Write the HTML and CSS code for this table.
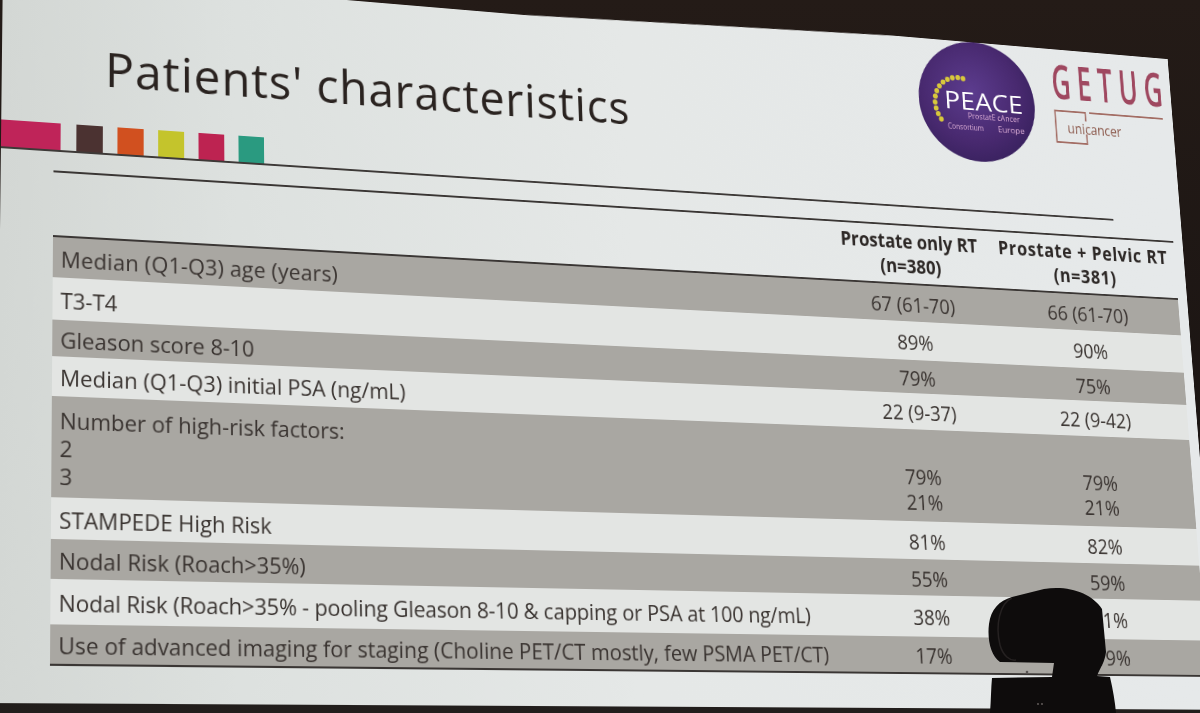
FILE: index.html
```html
<!DOCTYPE html>
<html lang="en">
<head>
<meta charset="utf-8">
<title>Patients' characteristics</title>
<link rel="stylesheet" href="styles.css">
</head>
<body>
<div class="screen">
  <section class="slide">
    <header class="head">
      <div class="head-left">
        <h1 class="title">Patients' characteristics</h1>
        <div class="swatches">
          <span class="sw sw-bar"></span>
          <span class="sw sw-brown"></span>
          <span class="sw sw-orange"></span>
          <span class="sw sw-lime"></span>
          <span class="sw sw-red"></span>
          <span class="sw sw-teal"></span>
        </div>
      </div>
      <svg class="peace" width="146" height="136" viewBox="0 0 146 136">
        <defs>
          <radialGradient id="pg" cx="45%" cy="42%" r="60%">
            <stop offset="0" stop-color="#5c3c8e"/>
            <stop offset="0.7" stop-color="#48296f"/>
            <stop offset="1" stop-color="#3a2260"/>
          </radialGradient>
        </defs>
        <ellipse cx="73" cy="68" rx="73" ry="68" fill="url(#pg)"/>
        <g fill="#d8c83c">
          <circle cx="57" cy="42.8" r="3"/>
          <circle cx="50.4" cy="42" r="3"/>
          <circle cx="43.6" cy="42.7" r="3"/>
          <circle cx="37.2" cy="44.9" r="3"/>
          <circle cx="31.5" cy="48.4" r="3"/>
          <circle cx="26.7" cy="53.2" r="3"/>
          <circle cx="23" cy="58.9" r="3"/>
          <circle cx="20.8" cy="65.2" r="3"/>
          <circle cx="20" cy="72" r="3"/>
          <circle cx="20.8" cy="78.7" r="3"/>
          <circle cx="23" cy="85.1" r="3"/>
          <circle cx="26.6" cy="90.8" r="3"/>
        </g>
        <text class="peace-word" x="31.7" y="78" textLength="99" lengthAdjust="spacingAndGlyphs">PEACE</text>
        <text class="peace-small" x="60" y="88.5" textLength="65.6" lengthAdjust="spacingAndGlyphs">ProstatE cAncer</text>
        <text class="peace-small" x="34.2" y="101.5" textLength="45" lengthAdjust="spacingAndGlyphs">Consortium</text>
        <text class="peace-small" x="97" y="101.5" textLength="34" lengthAdjust="spacingAndGlyphs">Europe</text>
      </svg>
      <div class="getug">
        <div class="getug-word">GETUG</div>
        <svg class="unicancer" width="143" height="40" viewBox="0 0 143 40">
          <path d="M40.7 12 V2 H1.7 V38 H40.7 V27" fill="none" stroke="#a36d64" stroke-width="1.8"/>
          <path d="M46 2 H142" fill="none" stroke="#a36d64" stroke-width="1.8"/>
          <text class="uni-word" x="16.3" y="27" textLength="70" lengthAdjust="spacingAndGlyphs">unicancer</text>
        </svg>
      </div>
    </header>
    <div class="rule"></div>
    <table class="data">
      <colgroup>
        <col class="c-label">
        <col class="c-a">
        <col class="c-b">
      </colgroup>
      <thead>
        <tr>
          <th></th>
          <th>Prostate only RT<br>(n=380)</th>
          <th class="th-wide">Prostate + Pelvic RT<br>(n=381)</th>
        </tr>
      </thead>
      <tbody>
        <tr class="shade"><td class="lbl-wide">Median (Q1-Q3) age (years)</td><td>67 (61-70)</td><td>66 (61-70)</td></tr>
        <tr><td>T3-T4</td><td>89%</td><td>90%</td></tr>
        <tr class="shade"><td>Gleason score 8-10</td><td>79%</td><td>75%</td></tr>
        <tr><td>Median (Q1-Q3) initial PSA (ng/mL)</td><td>22 (9-37)</td><td>22 (9-42)</td></tr>
        <tr class="shade multi"><td>Number of high-risk factors:<br>2<br>3</td><td><br>79%<br>21%</td><td><br>79%<br>21%</td></tr>
        <tr><td>STAMPEDE High Risk</td><td>81%</td><td>82%</td></tr>
        <tr class="shade"><td>Nodal Risk (Roach&gt;35%)</td><td>55%</td><td>59%</td></tr>
        <tr><td class="lbl-tight">Nodal Risk (Roach&gt;35% - pooling Gleason 8-10 &amp; capping or PSA at 100 ng/mL)</td><td>38%</td><td>41%</td></tr>
        <tr class="shade"><td>Use of advanced imaging for staging (Choline PET/CT mostly, few PSMA PET/CT)</td><td>17%</td><td>19%</td></tr>
      </tbody>
    </table>
  </section>
  <svg class="camera" width="1200" height="713" viewBox="0 0 1200 713">
    <path d="M1000 662 C991 656 987 640 989 624 C991 609 999 601 1012 597 L1044 589 C1068 585 1092 593 1102 609 L1106 652 C1105 662 1100 668 1097 676 L1110 677 C1113 690 1115 702 1116 713 L990 713 C991 700 991 688 992 678 L1052 677 L1054 663 Z" fill="#0e0c0c"/>
    <path d="M1012 598 C1000 603 995 625 1000 645 C1003 656 1010 661 1016 660" fill="none" stroke="#252121" stroke-width="1.5"/>
    <circle cx="1027" cy="672" r="1.3" fill="#5a5553"/>
    <circle cx="1038" cy="704" r="0.9" fill="#6a6563"/>
    <circle cx="1042" cy="704" r="0.9" fill="#6a6563"/>
  </svg>
</div>
</body>
</html>
```

FILE: styles.css
```css
html, body {
  margin: 0;
  padding: 0;
  height: 100%;
  overflow: hidden;
  background: #1c1715;
}

.screen {
  position: relative;
  width: 1200px;
  height: 713px;
  overflow: hidden;
  background: linear-gradient(180deg, #241b17 0%, #1b1513 60%, #221e1c 100%);
}

/* flat slide, projected like the photo (keystone + slight vertical convergence) */
.slide {
  width: 1352px;
  height: 729px;
  margin-top: -42px;
  transform-origin: 0 0;
  transform: matrix3d(0.985175, 0.084377, 0, 0.000106001,
                      -0.0110407, 0.962838, 0, -0.0000766713,
                      0, 0, 1, 0,
                      3.03005, 1.495555, 0, 1);
  clip-path: polygon(0 12px, 560px 12px, 1000px 0, 100% 0, 100% 100%, 0 100%);
  background: linear-gradient(90deg, #d3d7d4 0%, #dde1df 18%, #e5e8e7 50%, #e6e9ea 100%);
  font-family: "Open Sans", "Liberation Sans", sans-serif;
  color: #3a3431;
}

.head {
  display: flex;
  height: 190.5px;
}

.head-left {
  flex: 0 0 1027px;
  display: flex;
  flex-direction: column;
}

.title {
  margin: 70px 0 0 105px;
  font-size: 50px;
  line-height: 68px;
  font-weight: 400;
  letter-spacing: 1px;
  color: #2a2320;
  white-space: nowrap;
}

.swatches {
  margin-top: auto;
  display: flex;
  align-items: flex-end;
  gap: 15.2px;
}

.sw {
  width: 27px;
  height: 27px;
}

.sw-bar { width: 60px; height: 27px; margin-right: 0.5px; background: #bf2459; }
.sw-brown { background: #4b3231; }
.sw-orange { background: #d1501f; }
.sw-lime { background: #c4c42c; }
.sw-red { background: #bd2351; }
.sw-teal { background: #2a9a80; }

.peace {
  flex: 0 0 146px;
  display: block;
}

.peace-word {
  font-family: "Open Sans", "Liberation Sans", sans-serif;
  font-size: 28px;
  font-weight: 400;
  fill: #ffffff;
}

.peace-small {
  font-family: "Open Sans", "Liberation Sans", sans-serif;
  font-size: 9.5px;
  fill: #dcaed6;
}

.getug {
  margin-left: 24.3px;
  width: 143px;
  padding-top: 8.3px;
}

.getug-word {
  font-family: "Open Sans", "Liberation Sans", sans-serif;
  font-size: 54.6px;
  line-height: 57px;
  font-weight: 600;
  letter-spacing: 13px;
  color: #9f4860;
  white-space: nowrap;
  transform: scaleX(0.62);
  transform-origin: 0 0;
}

.unicancer {
  display: block;
  margin-top: 3.7px;
}

.uni-word {
  font-family: "Open Sans", "Liberation Sans", sans-serif;
  font-size: 17px;
  fill: #8d5b4e;
}

.rule {
  width: 1264px;
  height: 2px;
  background: #3d3937;
}

.data {
  margin: 19px 0 0 52.5px;
  width: 1287.5px;
  table-layout: fixed;
  border-collapse: collapse;
  border-top: 2px solid #3a3634;
  border-bottom: 2px solid #3a3634;
  font-size: 22.3px;
}

.c-label { width: 852px; }
.c-a { width: 200px; }
.c-b { width: 235.5px; }

.data th {
  height: 58.5px;
  padding: 0 2px 4.5px;
  vertical-align: bottom;
  font-size: 20.5px;
  line-height: 27px;
  font-weight: 700;
  color: #2d2826;
  text-align: center;
  white-space: nowrap;
  border-bottom: 2.5px solid #3a3634;
}

.data th.th-wide { letter-spacing: 0.8px; }

.data tbody tr {
  height: 40px;
  background: #e3e5e3;
}

.data tbody tr.shade { background: #a9a7a2; }

.data tbody tr:nth-child(1) { height: 41px; }
.data tbody tr:nth-child(2) { height: 42px; }
.data tbody tr:nth-child(3) { height: 36px; }
.data tbody tr:nth-child(4) { height: 39px; }
.data tbody tr:nth-child(5) { height: 98px; }
.data tbody tr:nth-child(6) { height: 40px; }
.data tbody tr:nth-child(7) { height: 38px; }
.data tbody tr:nth-child(8) { height: 43px; }
.data tbody tr:nth-child(9) { height: 38px; }

.data td {
  padding: 4px 4px 0;
  line-height: 28px;
  vertical-align: middle;
  text-align: center;
  white-space: nowrap;
}

.data td:first-child {
  padding-left: 8.5px;
  text-align: left;
}

.data td.lbl-wide { letter-spacing: 0.2px; }
.data td.lbl-tight { letter-spacing: -0.15px; }

.data tr.multi td {
  vertical-align: top;
  line-height: 27px;
  padding-top: 10px;
}

.camera {
  position: absolute;
  left: 0;
  top: 0;
  pointer-events: none;
}
```
